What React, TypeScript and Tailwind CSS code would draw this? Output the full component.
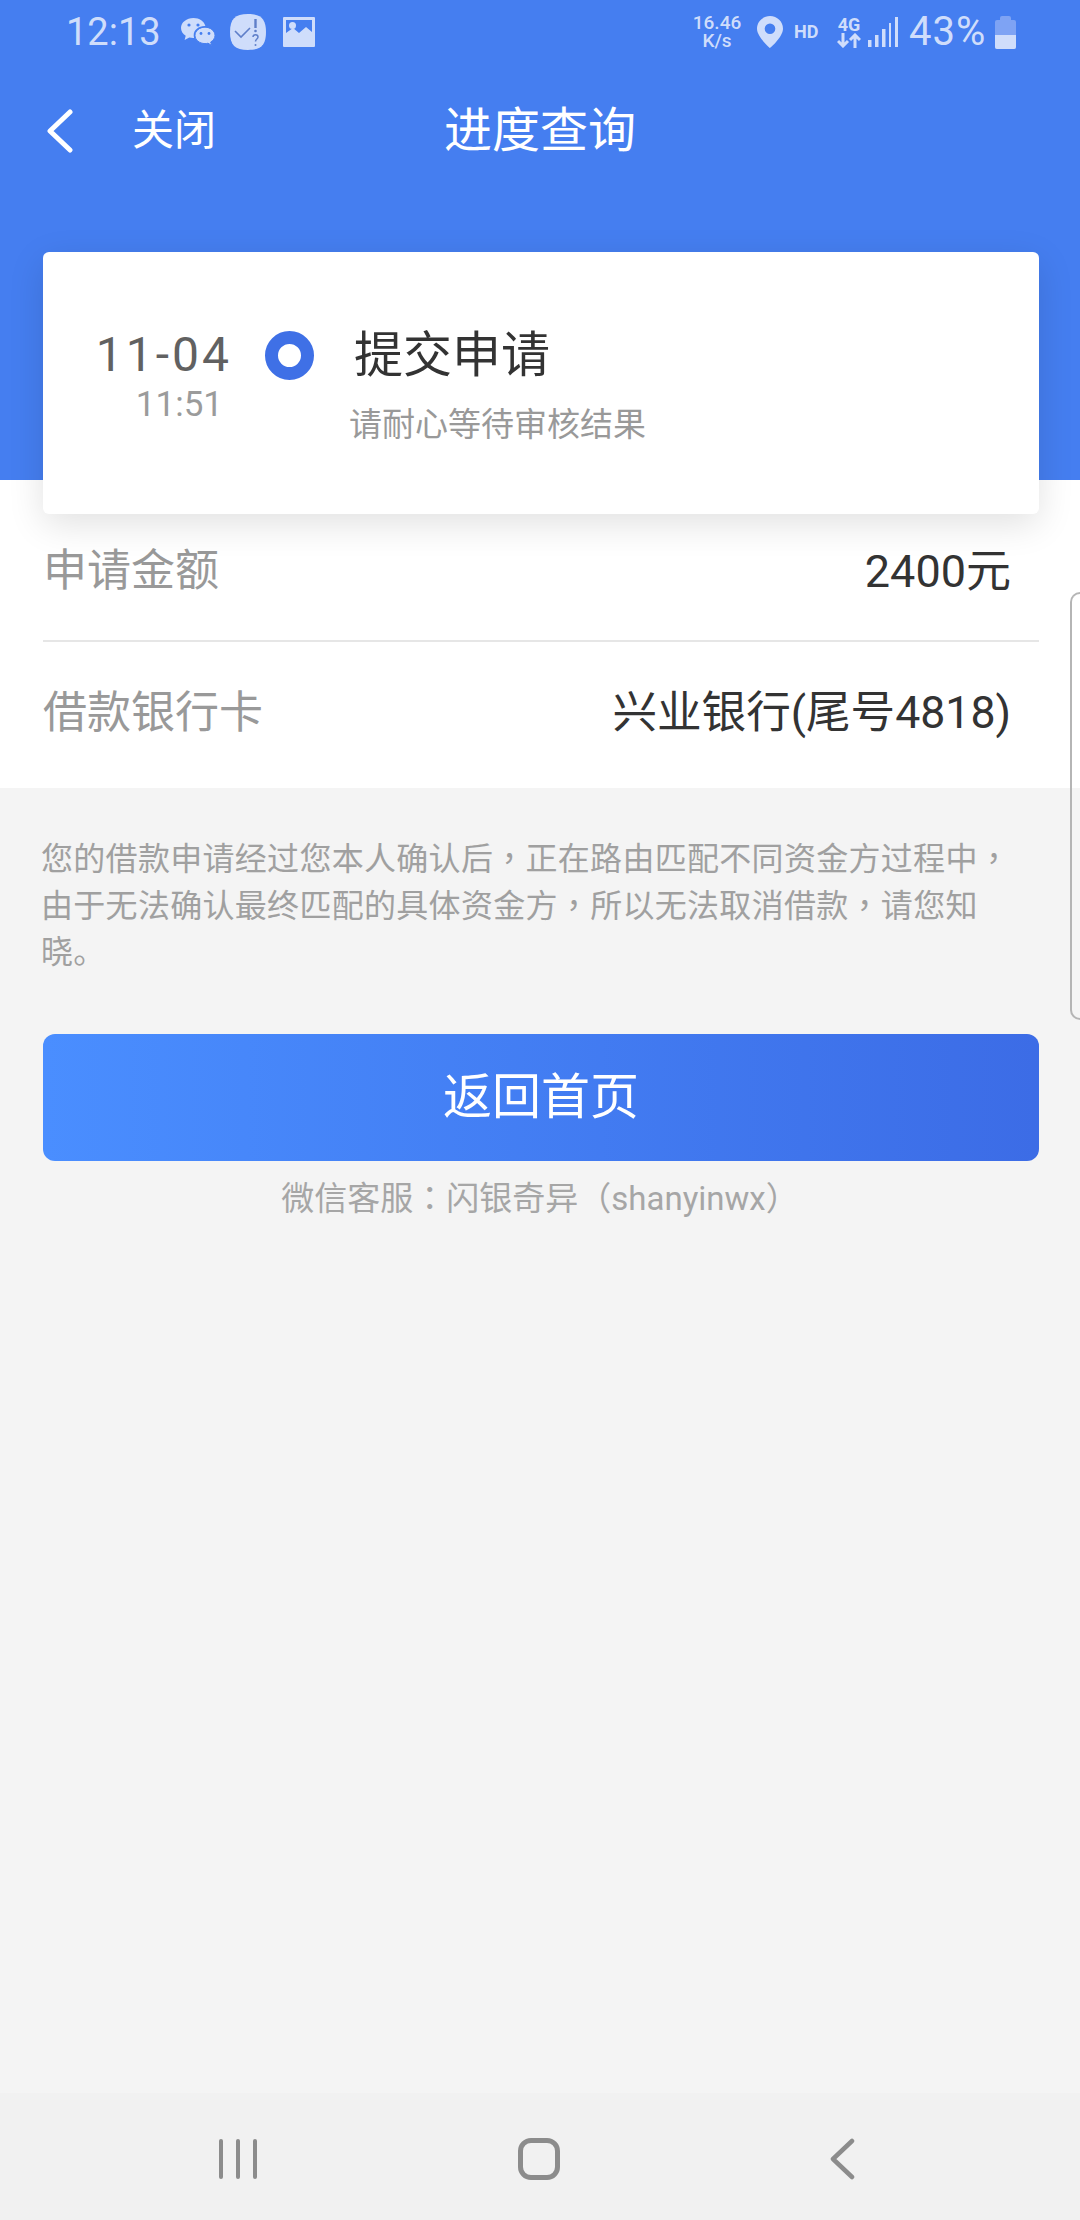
const FONT = "font-['Roboto','Noto_Sans_CJK_SC',sans-serif]";

// centered full-width punctuation, as on the device
function Punct({ children }: { children: string }) {
  return <span className="font-['Noto_Sans_CJK_TC',sans-serif] leading-none">{children}</span>;
}

function StatusBar() {
  return (
    <div className="flex h-[64px] items-center justify-between pl-[66px] pr-[64px] text-[#cfddfb]">
      <div className="flex items-center">
        <span className="w-[114px] text-[38px] leading-none">12:13</span>
        <svg width="36" height="30" viewBox="0 0 36 30" fill="currentColor">
          <path d="M13.5 1C6.6 1 1 5.4 1 11c0 3.2 1.9 6 4.7 7.8L4.6 23l4.7-2.6c1.2.3 2.5.5 3.9.5h.9a9 9 0 0 1-.4-2.6c0-5.1 4.9-9.2 10.9-9.2h.8C24.3 4.4 19.4 1 13.5 1z" />
          <path d="M35 18.4c0-4.5-4.5-8.2-10-8.2s-10 3.7-10 8.2 4.5 8.2 10 8.2c1 0 2-.1 3-.4l3.7 2.2-1-3.4c2.6-1.5 4.3-3.9 4.3-6.6z" stroke="#457ef0" strokeWidth="1" />
          <circle cx="9" cy="8" r="1.6" fill="#457ef0" />
          <circle cx="18" cy="8" r="1.6" fill="#457ef0" />
          <circle cx="21" cy="16.5" r="1.4" fill="#457ef0" />
          <circle cx="29" cy="16.5" r="1.4" fill="#457ef0" />
        </svg>
        <svg className="ml-[14px]" width="36" height="36" viewBox="0 0 36 36">
          <path d="M18 0c13 0 18 5 18 18s-5 18-18 18S0 31 0 18 5 0 18 0z" fill="currentColor" />
          <path d="M5 17l6 6 9-9" fill="none" stroke="#5f7fc9" strokeWidth="1.6" />
          <path d="M25.5 5v9" stroke="#5f7fc9" strokeWidth="2.4" />
          <circle cx="25.5" cy="17" r="1.3" fill="#5f7fc9" />
          <path d="M23 23c0-3 5-3 5 0 0 2-2.5 2-2.5 4.5" fill="none" stroke="#5f7fc9" strokeWidth="1.5" />
          <circle cx="25.5" cy="31" r="1" fill="#5f7fc9" />
        </svg>
        <svg className="ml-[17px]" width="32" height="30" viewBox="0 0 32 30">
          <path fillRule="evenodd" d="M1 0h30a1 1 0 0 1 1 1v28a1 1 0 0 1-1 1H1a1 1 0 0 1-1-1V1a1 1 0 0 1 1-1zm2 3v13l7-5 6 5 7-6 6 5V3H3z" fill="currentColor" />
          <circle cx="9.5" cy="8.5" r="3.5" fill="currentColor" />
        </svg>
      </div>
      <div className="flex items-center">
        <span className="w-[54px] whitespace-pre-line text-center text-[19px] font-medium leading-[18px]">{"16.46\nK/s"}</span>
        <svg className="ml-[13px]" width="26" height="32" viewBox="0 0 26 32" fill="currentColor">
          <path fillRule="evenodd" d="M13 0C5.8 0 0 5.6 0 12.7 0 21 13 32 13 32s13-11 13-19.3C26 5.6 20.2 0 13 0zm0 7.5a5.3 5.3 0 1 1 0 10.6 5.3 5.3 0 0 1 0-10.6z" />
        </svg>
        <span className="ml-[11px] w-[30px] text-[18px] font-bold leading-none">HD</span>
        <div className="ml-[12px] flex w-[26px] flex-col items-center">
          <span className="text-[18px] font-bold leading-[17px]">4G</span>
          <svg width="24" height="15" viewBox="0 0 24 15" fill="none" stroke="currentColor" strokeWidth="3">
            <path d="M6 0v13M1 8l5 5 5-5M18 15V2M13 7l5-5 5 5" />
          </svg>
        </div>
        <svg className="ml-[6px]" width="30" height="30" viewBox="0 0 30 30" fill="currentColor">
          <rect x="0" y="23" width="3.5" height="7" />
          <rect x="7" y="18" width="3.5" height="12" />
          <rect x="14" y="12" width="3.5" height="18" />
          <rect x="21" y="6" width="2" height="24" />
          <rect x="27" y="0" width="3" height="30" />
        </svg>
        <span className="ml-[11px] w-[85px] text-[40px] leading-none tracking-[1px]">43%</span>
        <div className="ml-[1px] flex flex-col items-center">
          <div className="h-[4px] w-[11px] rounded-t-[2px] bg-[#7ea3f4]" />
          <div className="flex h-[29px] w-[21px] flex-col justify-end overflow-hidden rounded-[2px] bg-[#7ea3f4]">
            <div className="h-[14px] bg-[#cfddfb]" />
          </div>
        </div>
      </div>
    </div>
  );
}

function TopBar() {
  return (
    <div className="mt-[25px] flex h-[84px] items-center px-[47px] text-white">
      <div className="flex flex-1 items-center">
        <svg width="26" height="44" viewBox="0 0 26 44" fill="none" stroke="currentColor" strokeWidth="5" strokeLinecap="round" strokeLinejoin="round">
          <path d="M23 3L3 22l20 19" />
        </svg>
        <span className="ml-[59px] text-[42px] leading-none">关闭</span>
      </div>
      <span className="text-[48px] leading-none">进度查询</span>
      <div className="flex-1" />
    </div>
  );
}

function StatusCard() {
  return (
    <div className="relative z-10 mt-[79px] mr-[41px] ml-[43px] flex h-[262px] rounded-[6px] bg-white pl-[53px] shadow-[0_10px_36px_rgba(0,0,0,0.12)]">
      <div className="mt-[76px] flex w-[136px] flex-col items-end">
        <span className="whitespace-nowrap text-[48px] leading-[54px] tracking-[3px] text-[#616161]">11-04</span>
        <span className="mt-[1px] mr-[9px] text-[35px] leading-[44px] text-[#9b9b9b]">11:51</span>
      </div>
      <div className="mt-[79px] ml-[33px] h-[49px] w-[49px] rounded-full border-[13px] border-[#3f70e6] bg-white" />
      <div className="ml-[40px] flex flex-col">
        <span className="mt-[76px] text-[49px] leading-[56px] text-[#333333]">提交申请</span>
        <span className="mt-[21px] -ml-[5px] text-[33px] leading-[40px] text-[#999999]">请耐心等待审核结果</span>
      </div>
    </div>
  );
}

export default function App() {
  return (
    <div className={`relative flex h-[2220px] w-[1080px] flex-col overflow-hidden bg-[#f4f4f4] ${FONT}`}>
      <div className="h-[480px] shrink-0 bg-[#457ef0]">
        <StatusBar />
        <TopBar />
        <StatusCard />
      </div>

      <div className="h-[308px] shrink-0 bg-white pt-[34px]">
        <div className="mr-[41px] ml-[43px] flex h-[128px] items-center justify-between border-b-2 border-[#e6e6e6] pr-[28px] pb-[12px]">
          <span className="text-[44px] leading-none text-[#999999]">申请金额</span>
          <span className="text-[45px] leading-none text-[#333333]">2400元</span>
        </div>
        <div className="mr-[41px] ml-[43px] flex h-[146px] items-center justify-between pr-[28px] pb-[4px]">
          <span className="text-[44px] leading-none text-[#999999]">借款银行卡</span>
          <span className="text-[44.6px] leading-none text-[#333333]">兴业银行(尾号4818)</span>
        </div>
      </div>

      <p className="mt-[48px] ml-[41px] w-[985px] text-[32px] leading-[46.5px] tracking-[0.3px] text-[#a0a0a0]">
        您的借款申请经过您本人确认后<Punct>，</Punct>正在路由匹配不同资金方过程中<Punct>，</Punct>
        <br />
        由于无法确认最终匹配的具体资金方<Punct>，</Punct>所以无法取消借款<Punct>，</Punct>请您知
        <br />
        晓。
      </p>

      <button className="mt-[58px] mr-[41px] ml-[43px] flex h-[127px] shrink-0 items-center justify-center rounded-[12px] bg-gradient-to-r from-[#4a8eff] to-[#3c6ce6] text-[49px] leading-none text-white">
        返回首页
      </button>
      <p className="mt-[19px] text-center text-[33px] leading-[38px] text-[#a6a6a6]">
        微信客服<Punct>：</Punct>闪银奇异（shanyinwx）
      </p>

      <div className="mt-auto flex h-[127px] items-center bg-[#f1f1f1] pt-[4px] text-[#8c8c8c]">
        <div className="ml-[219px] flex gap-[13px]">
          <div className="h-[40px] w-[4px] rounded-full bg-current" />
          <div className="h-[40px] w-[4px] rounded-full bg-current" />
          <div className="h-[40px] w-[4px] rounded-full bg-current" />
        </div>
        <div className="ml-[261px] h-[42px] w-[42px] rounded-[13px] border-[5px] border-current" />
        <svg className="ml-[270px]" width="25" height="42" viewBox="0 0 25 42" fill="none" stroke="currentColor" strokeWidth="4.5" strokeLinecap="round" strokeLinejoin="round">
          <path d="M22 3L3 21l19 18" />
        </svg>
      </div>

      {/* edge panel handle */}
      <div className="absolute right-0 top-[592px] h-[428px] w-[10px] rounded-l-[12px] border-y-2 border-l-2 border-[#b5b5b5] bg-white/10" />
    </div>
  );
}
